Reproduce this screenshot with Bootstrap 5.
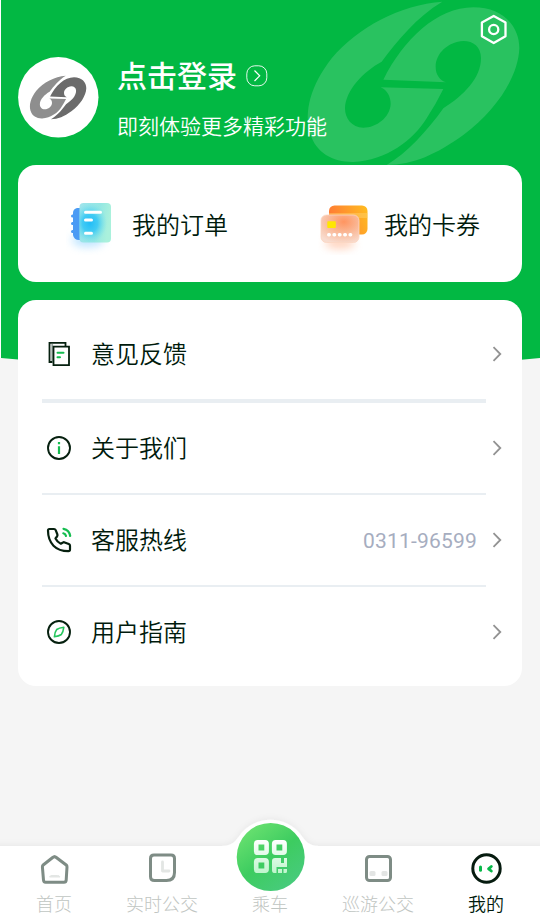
<!DOCTYPE html>
<html lang="zh-CN">
<head>
<meta charset="utf-8">
<meta name="viewport" content="width=device-width, initial-scale=1">
<title>我的</title>
<link rel="stylesheet" href="https://cdn.jsdelivr.net/npm/bootstrap@5.3.0/dist/css/bootstrap.min.css">
<style>
body{background:#f5f5f5;color:#001a0c;font-family:Roboto,"Noto Sans CJK SC",sans-serif;}
.screen{width:540px;height:921px;}
.backdrop{left:0;top:0;z-index:0;}
.profile{height:165px;padding:57px 0 0 18px;}
.avatar{width:81px;height:81px;margin-right:18px;}
.login{font-size:30px;font-weight:500;line-height:38px;padding-top:1px;}
.login svg{margin-top:-2px;margin-left:9px;}
.welcome{font-size:21px;line-height:30px;margin-top:16px;font-weight:350;}
.gear{left:478px;top:14px;}
.panel{margin:0 18px;border-radius:18px;}
.assets{height:117px;margin-bottom:18px;font-size:24px;font-weight:350;}
.assets svg{margin-top:-2px;}
.asset-a{margin:4px 0 0 14px;}
.asset-b{margin:4px 0 0 12px;}
.menu-list{height:386px;padding-top:9px;font-size:24px;font-weight:350;}
.entry{height:90px;padding:0 20px 0 28px;}
.entry span{padding-top:2px;}
.entry-icon{margin-right:19px;}
.rule{margin:0 36px 0 24px;height:2px;background:#e9eef2;}
.rule-thick{height:4px;}
.entry .phone{font-size:21px;font-weight:400;color:#a6adbf;letter-spacing:.2px;margin-right:15px;padding-top:3px;}
.tabs{height:75px;font-size:18px;font-weight:300;color:#bfc5c2;}
.tabs-bg{left:0;top:-35px;}
.tab-item{width:108px;padding-top:5px;}
.tab-item span{line-height:27px;margin-top:4px;}
.tab-item.current{color:#001a0c;font-weight:350;}
.ride{left:236px;top:-24px;}
</style>
<script src="https://cdn.jsdelivr.net/npm/bootstrap@5.3.0/dist/js/bootstrap.bundle.min.js"></script>
</head>
<body>
<svg width="0" height="0" class="position-absolute">
  <defs>
    <path id="wing-l" d="M457 5C330 15 205 80 125 175C60 260 42 335 60 400C78 460 130 487 190 486C290 482 370 420 410 355Q438 312 460 267L272 262C292 271 302 290 302 312C300 352 260 383 220 383C185 383 165 355 165 325C167 270 220 215 275 185C320 125 380 50 457 5Z"/>
    <path id="wing-r" d="M280 239C340 120 440 22 550 22C640 22 688 80 688 145C685 230 620 330 520 405C440 462 370 495 290 495C350 460 410 395 460 325C520 287 573 235 573 175C573 140 550 123 520 123C475 125 437 160 437 200C437 225 450 240 468 247Z"/>
    <symbol id="chev" viewBox="0 0 10 16"><path d="M1.500 1.200L8.300 8L1.500 14.800" fill="none" stroke="#929292" stroke-width="1.800"/></symbol>
  </defs>
</svg>
<div class="screen position-relative d-flex flex-column overflow-hidden">
  <svg class="backdrop position-absolute" width="540" height="370">
    <path d="M0 0V358" stroke="#fff" stroke-width="2"/>
    <path d="M1 0H540V358Q270 384 1 358Z" fill="#02b843"/>
    <g transform="translate(290 0) scale(.33333)" fill="#29c260"><use href="#wing-l"/><use href="#wing-r"/></g>
  </svg>

  <header class="profile position-relative d-flex align-items-start text-white">
    <svg class="avatar" viewBox="0 0 81 81"><circle cx="40.300" cy="40.300" r="40.200" fill="#fff"/>
      <g transform="translate(7.200 18.300) scale(.0888)"><use href="#wing-l" fill="#8e8e8e"/><use href="#wing-r" fill="#6b6b6b"/></g></svg>
    <div>
      <div class="login d-flex align-items-center">点击登录
        <svg width="22" height="22" viewBox="0 0 22 22" fill="none" stroke="#fff"><rect x=".8" y=".8" width="20" height="20" rx="8" stroke-width=".9"/><path d="M8.500 5.500L13.700 10.800L8.500 16" stroke-width="1.200"/></svg>
      </div>
      <div class="welcome">即刻体验更多精彩功能</div>
    </div>
    <svg class="gear position-absolute" width="32" height="32" viewBox="0 0 32 32" fill="none" stroke="#fff" stroke-width="2.300" stroke-linejoin="round"><path d="M15.700 2L27.500 8.600V22.300L15.700 29L3.900 22.300V8.600Z"/><circle cx="15.700" cy="15.500" r="4.600"/></svg>
  </header>

  <section class="panel assets position-relative bg-white d-flex align-items-center flex-shrink-0">
    <div class="d-flex align-items-center w-50">
      <svg class="ms-5" width="52" height="64" viewBox="66 190 52 64">
        <defs>
          <linearGradient id="book" x1="0" x2="1" y1="0" y2=".2"><stop stop-color="#9fe4ec"/><stop offset=".65" stop-color="#94e7e3"/><stop offset="1" stop-color="#aaf1dc"/></linearGradient>
          <radialGradient id="glow"><stop stop-color="#22bdf7"/><stop offset=".45" stop-color="#38c8f5" stop-opacity=".9"/><stop offset="1" stop-color="#70e0ec" stop-opacity="0"/></radialGradient>
          <filter id="soft" x="-50%" y="-100%" width="200%" height="300%"><feGaussianBlur stdDeviation="4"/></filter>
        </defs>
        <ellipse cx="88" cy="239" rx="16" ry="7" fill="#a9dcff" opacity=".75" filter="url(#soft)"/>
        <path d="M80 207H77Q73 208 73 212V234Q74 239 79 239H80Z" fill="#4b9bf4"/>
        <path d="M72.500 215H76M72.500 222.500H76M72.500 230.500H76" stroke="#4b9bf4" stroke-width="3" stroke-linecap="round"/>
        <rect x="79.500" y="202" width="31.500" height="39.500" rx="4" fill="url(#book)"/>
        <clipPath id="bookclip"><rect x="79.500" y="202" width="31.500" height="39.500" rx="4"/></clipPath>
        <ellipse cx="90" cy="222" rx="17" ry="20" fill="url(#glow)" clip-path="url(#bookclip)"/>
        <path d="M85.500 211.300H100.500M85.500 219H91.500M85.500 232.300H91.500" stroke="#fff" stroke-width="3" stroke-linecap="round"/>
      </svg>
      <span class="asset-a">我的订单</span>
    </div>
    <div class="d-flex align-items-center w-50">
      <svg class="ms-5" width="54" height="64" viewBox="318 190 54 64">
        <defs>
          <linearGradient id="backcard" x1="0" x2="1" y1=".3" y2="0"><stop stop-color="#ff7a35"/><stop offset="1" stop-color="#ffbe20"/></linearGradient>
          <radialGradient id="frontcard" cx=".6" cy=".25" r=".8"><stop stop-color="#ff9560"/><stop offset=".45" stop-color="#fab592"/><stop offset="1" stop-color="#f8dccf"/></radialGradient>
        </defs>
        <ellipse cx="340" cy="242" rx="15" ry="6" fill="#ffc5a8" opacity=".75" filter="url(#soft)"/>
        <rect x="329" y="204.500" width="38.500" height="29" rx="5.500" fill="url(#backcard)"/>
        <path d="M329 212H367.500V217H329Z" fill="#ffd06a" opacity=".5"/>
        <rect x="321" y="214" width="38" height="27.500" rx="5.500" fill="url(#frontcard)" stroke="#fbd5c2" stroke-width=".8"/>
        <rect x="327.300" y="220.300" width="8.500" height="6.700" rx=".8" fill="#ffe600"/>
        <path d="M328.700 233.700H352" stroke="#fff" stroke-width="3.400" stroke-dasharray=".6 4.750" stroke-linecap="round"/>
      </svg>
      <span class="asset-b">我的卡券</span>
    </div>
  </section>

  <section class="panel menu-list position-relative bg-white flex-shrink-0">
    <div class="entry d-flex align-items-center">
      <svg class="entry-icon" width="26" height="28" viewBox="0 0 26 28" fill="none" stroke="#06200f" stroke-width="1.800"><path d="M6.500 22H3.500V2.900H19.500V6.500" /><path d="M6.200 4V21" stroke="#9aa8a1" stroke-width="1.800"/><path d="M7.500 6.700H23V25.200H7.500Z"/><path d="M11.500 12.800H17.500M11.500 17.300H14" stroke="#15bd50" stroke-width="2" stroke-linecap="round"/></svg>
      <span>意见反馈</span><svg class="ms-auto" width="10" height="16"><use href="#chev"/></svg>
    </div>
    <div class="rule rule-thick"></div>
    <div class="entry d-flex align-items-center">
      <svg class="entry-icon" width="26" height="26" viewBox="0 0 26 26" fill="none" stroke="#06200f" stroke-width="1.900"><circle cx="13" cy="13" r="11"/><path d="M13 11.300V19M13 7V9.300" stroke="#15bd50" stroke-width="2.200"/></svg>
      <span>关于我们</span><svg class="ms-auto" width="10" height="16"><use href="#chev"/></svg>
    </div>
    <div class="rule"></div>
    <div class="entry d-flex align-items-center">
      <svg class="entry-icon" width="26" height="26" viewBox="0 0 26 26" fill="none" stroke="#06200f" stroke-width="2.200" stroke-linecap="round" stroke-linejoin="round"><path d="M3.400 2H8Q9.200 2 9.700 3.200L11.400 7.500Q11.700 8.600 11 9.500L9.500 11.500Q11.200 15 14.800 16.700L17 15.500Q17.700 15 18.700 15.400L22.800 17Q24 17.500 24 18.800V22.500Q24 24.200 22.300 24.200Q13 24.200 7.500 18.700Q2 13 2 3.600Q2 2 3.400 2Z"/><path d="M17.500 1.800Q23.400 3 24.200 9M17.300 6.300Q19.600 7 20 9" stroke="#15bd50"/></svg>
      <span>客服热线</span><span class="phone ms-auto">0311-96599</span><svg width="10" height="16"><use href="#chev"/></svg>
    </div>
    <div class="rule"></div>
    <div class="entry d-flex align-items-center">
      <svg class="entry-icon" width="26" height="26" viewBox="0 0 26 26" fill="none" stroke="#06200f" stroke-width="1.900"><circle cx="13" cy="13" r="11"/><path d="M17.800 8.200Q17.300 13 15.300 15.500Q13 17.200 8.400 17.800Q8.700 13 10.700 10.500Q13 8.700 17.800 8.200Z" stroke="#26c65d" stroke-width="1.600" stroke-linejoin="round"/></svg>
      <span>用户指南</span><svg class="ms-auto" width="10" height="16"><use href="#chev"/></svg>
    </div>
  </section>

  <nav class="tabs position-relative d-flex mt-auto flex-shrink-0">
    <svg class="tabs-bg position-absolute" width="540" height="110">
      <defs><filter id="shade" x="-5%" y="-20%" width="110%" height="140%"><feDropShadow dx="0" dy="-1" stdDeviation="3" flood-color="#000" flood-opacity=".055"/></filter></defs>
      <path d="M-10 35H222C233 35 236 29 240 24A38 38 0 0 1 301 24C305 29 308 35 319 35H550V120H-10Z" fill="#fff" filter="url(#shade)"/>
    </svg>
    <div class="tab-item position-relative d-flex flex-column align-items-center">
      <svg width="36" height="36" viewBox="0 0 36 36" fill="none"><path d="M18.500 5.800Q19.200 5.500 20 6.300L30.200 14Q31 14.700 31 16L30.200 29Q30 31.200 28 31.200H9.500Q7.600 31.200 7.500 29L6.400 16Q6.400 14.700 7.200 14L17 6.300Q17.800 5.600 18.500 5.800Z" stroke="#7e8c85" stroke-width="3"/><path d="M13.500 26Q14 24.500 16 24.500H21.500Q23.500 24.500 24 26Z" fill="#e3e6e4" stroke="#e3e6e4" stroke-width="1"/></svg>
      <span>首页</span>
    </div>
    <div class="tab-item position-relative d-flex flex-column align-items-center">
      <svg width="36" height="36" viewBox="0 0 36 36" fill="none"><path d="M10 4H27Q30.500 4 30.500 7.500V21.500Q30.500 29.500 22.500 29.500H10.500Q6.500 29.500 6.500 25.500V7.500Q6.500 4 10 4Z" stroke="#7e8c85" stroke-width="3"/><path d="M18.500 11V20H25" stroke="#e3e6e4" stroke-width="2.800" stroke-linecap="round" stroke-linejoin="round"/></svg>
      <span>实时公交</span>
    </div>
    <div class="tab-item position-relative d-flex flex-column align-items-center">
      <svg width="36" height="36"></svg><span>乘车</span>
    </div>
    <div class="tab-item position-relative d-flex flex-column align-items-center">
      <svg width="36" height="36" viewBox="0 0 36 36" fill="none"><rect x="6.500" y="5.500" width="24" height="24" rx="3" stroke="#7e8c85" stroke-width="3"/><rect x="9.500" y="20" width="6" height="5" rx="1.500" fill="#e3e5e4"/><rect x="21.500" y="20" width="6" height="5" rx="1.500" fill="#e3e5e4"/></svg>
      <span>巡游公交</span>
    </div>
    <div class="tab-item current position-relative d-flex flex-column align-items-center">
      <svg width="36" height="36" viewBox="0 0 36 36" fill="none"><circle cx="18.500" cy="17.500" r="13.700" stroke="#061b0f" stroke-width="3"/><path d="M12.500 16V19.200" stroke="#08b849" stroke-width="3" stroke-linecap="round"/><path d="M23.300 15.500L20.600 17.800L23.300 20" stroke="#08b849" stroke-width="2.900" stroke-linecap="round" stroke-linejoin="round"/></svg>
      <span>我的</span>
    </div>
    <svg class="ride position-absolute" width="70" height="70" viewBox="0 0 70 70">
      <defs>
        <linearGradient id="disc" x1=".2" y1=".1" x2=".8" y2=".9"><stop stop-color="#65df6e"/><stop offset=".5" stop-color="#3dcc60"/><stop offset="1" stop-color="#47cb7b"/></linearGradient>
        <linearGradient id="qr" x1="0" y1="18" x2="0" y2="51" gradientUnits="userSpaceOnUse"><stop stop-color="#fff"/><stop offset="1" stop-color="#bff5cd"/></linearGradient>
      </defs>
      <circle cx="34.700" cy="35" r="34" fill="url(#disc)"/>
      <g fill="none" stroke="url(#qr)" stroke-width="4.600"><rect x="20.200" y="20.200" width="10.400" height="10.600" rx="1.500"/><rect x="38.200" y="20.200" width="10.400" height="10.600" rx="1.500"/><rect x="20.200" y="38.200" width="10.400" height="10.600" rx="1.500"/></g>
      <path d="M39 36H45V41H48V36H51V45H40.500V51H38Q36 51 36 48V39Q36 36 39 36ZM42 47H46V51H42ZM47.500 47H51V49.500Q51 51 49.500 51H47.500Z" fill="url(#qr)"/>
    </svg>
  </nav>
</div>
</body>
</html>
